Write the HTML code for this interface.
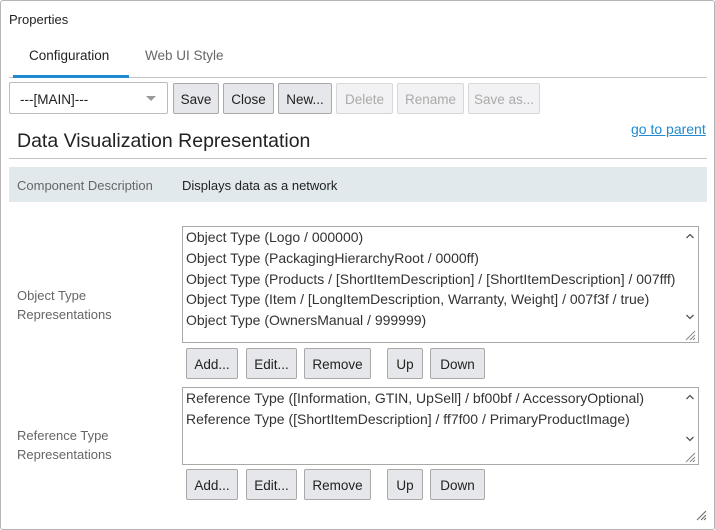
<!DOCTYPE html>
<html><head><meta charset="utf-8"><style>
*{box-sizing:border-box;margin:0;padding:0}
body{width:715px;height:530px;background:#fff;font-family:"Liberation Sans",sans-serif;font-size:13px;color:#222;position:relative;overflow:hidden}
.a{position:absolute;white-space:nowrap}
.frame{position:absolute;left:0;top:0;width:715px;height:530px;border:1px solid #b5b5b5;border-radius:3px}
.btn{position:absolute;height:31px;background:#e6e7eb;border:1px solid #a9a9a9;border-radius:2px;font-size:13.5px;color:#222;text-align:center;line-height:31px}
.dis{background:#f2f2f4;border-color:#d8d8d8;color:#aaa}
.ta{position:absolute;border:1px solid #a9a9a9;background:#fff;font-size:14px;color:#333}
.ta div{position:absolute;left:3px;white-space:nowrap}
.ta svg{position:absolute}
.lbl{color:#666;font-size:13px}
</style></head><body>
<div class="frame"></div>
<div class="a" style="left:9px;top:12px;font-size:13px">Properties</div>
<div class="a" style="left:29px;top:48px;font-size:13.5px">Configuration</div>
<div class="a" style="left:145px;top:48px;font-size:13.5px;color:#666">Web UI Style</div>
<div class="a" style="left:9px;top:77px;width:698px;height:1px;background:#c4c4c4"></div>
<div class="a" style="left:13px;top:75px;width:116px;height:3px;background:#1f8ad1"></div>
<div class="a" style="left:9px;top:82px;width:159px;height:32px;border:1px solid #bcbcbc;border-radius:2px"></div>
<div class="a" style="left:20px;top:92px;font-size:13.5px">---[MAIN]---</div>
<div class="a" style="left:146px;top:96px;width:0;height:0;border-left:5px solid transparent;border-right:5px solid transparent;border-top:5px solid #999"></div>
<div class="btn" style="left:173px;top:83px;width:46px">Save</div>
<div class="btn" style="left:223px;top:83px;width:51px">Close</div>
<div class="btn" style="left:278px;top:83px;width:54px">New...</div>
<div class="btn dis" style="left:336px;top:83px;width:57px">Delete</div>
<div class="btn dis" style="left:397px;top:83px;width:67px">Rename</div>
<div class="btn dis" style="left:468px;top:83px;width:72px">Save as...</div>
<div class="a" style="left:631px;top:121px;font-size:14px;color:#1f8ad1;text-decoration:underline">go to parent</div>
<div class="a" style="left:17px;top:130px;font-size:19.5px;color:#222">Data Visualization Representation</div>
<div class="a" style="left:9px;top:158px;width:698px;height:1px;background:#c4c4c4"></div>
<div class="a" style="left:9px;top:167px;width:698px;height:35px;background:#e1e9ec"></div>
<div class="a lbl" style="left:17px;top:178px">Component Description</div>
<div class="a" style="left:182px;top:178px;font-size:13px">Displays data as a network</div>
<div class="a lbl" style="left:17px;top:286px;line-height:19px;white-space:normal">Object Type<br>Representations</div>
<div class="ta" style="left:182px;top:226px;width:517px;height:117px">
<div style="top:2px">Object Type (Logo / 000000)</div>
<div style="top:23px">Object Type (PackagingHierarchyRoot / 0000ff)</div>
<div style="top:44px">Object Type (Products / [ShortItemDescription] / [ShortItemDescription] / 007fff)</div>
<div style="top:64px">Object Type (Item / [LongItemDescription, Warranty, Weight] / 007f3f / true)</div>
<div style="top:85px">Object Type (OwnersManual / 999999)</div>
<svg style="left:502px;top:5px" width="10" height="8"><path d="M1.5 6L5 2.5L8.5 6" fill="none" stroke="#555" stroke-width="1.3"/></svg>
<svg style="left:502px;top:86px" width="10" height="8"><path d="M1.5 2L5 5.5L8.5 2" fill="none" stroke="#555" stroke-width="1.3"/></svg>
</div>
<div class="btn" style="left:186px;top:348px;width:52px">Add...</div>
<div class="btn" style="left:246px;top:348px;width:51px">Edit...</div>
<div class="btn" style="left:304px;top:348px;width:67px">Remove</div>
<div class="btn" style="left:387px;top:348px;width:36px">Up</div>
<div class="btn" style="left:430px;top:348px;width:55px">Down</div>
<div class="a lbl" style="left:17px;top:426px;line-height:19px;white-space:normal">Reference Type<br>Representations</div>
<div class="ta" style="left:182px;top:387px;width:517px;height:78px">
<div style="top:2px">Reference Type ([Information, GTIN, UpSell] / bf00bf / AccessoryOptional)</div>
<div style="top:23px">Reference Type ([ShortItemDescription] / ff7f00 / PrimaryProductImage)</div>
<svg style="left:502px;top:5px" width="10" height="8"><path d="M1.5 6L5 2.5L8.5 6" fill="none" stroke="#555" stroke-width="1.3"/></svg>
<svg style="left:502px;top:47px" width="10" height="8"><path d="M1.5 2L5 5.5L8.5 2" fill="none" stroke="#555" stroke-width="1.3"/></svg>
</div>
<div class="btn" style="left:186px;top:469px;width:52px">Add...</div>
<div class="btn" style="left:246px;top:469px;width:51px">Edit...</div>
<div class="btn" style="left:304px;top:469px;width:67px">Remove</div>
<div class="btn" style="left:387px;top:469px;width:36px">Up</div>
<div class="btn" style="left:430px;top:469px;width:55px">Down</div>
<svg class="a" style="left:683px;top:328px" width="14" height="14"><path d="M3 12L12 3M7 12L12 7M10 12L12 10" stroke="#888" stroke-width="1"/></svg>
<svg class="a" style="left:683px;top:450px" width="14" height="14"><path d="M3 12L12 3M7 12L12 7M10 12L12 10" stroke="#888" stroke-width="1"/></svg>
<svg class="a" style="left:694px;top:508px" width="14" height="14"><path d="M3 12L12 3M7 12L12 7M10 12L12 10" stroke="#666" stroke-width="1"/></svg>
</body></html>
